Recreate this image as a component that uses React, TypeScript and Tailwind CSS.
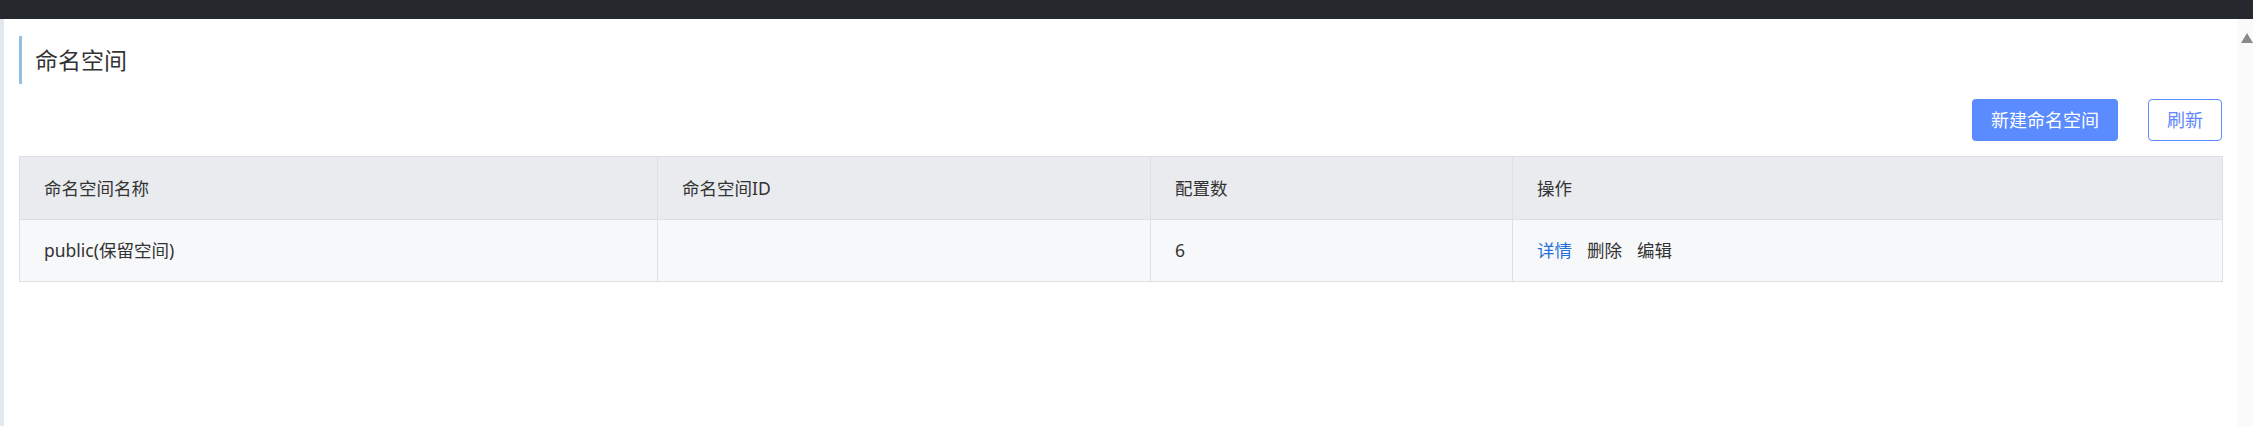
const font = { fontFamily: '"Noto Sans", "Noto Sans CJK SC", sans-serif' };

const columns = ["命名空间名称", "命名空间ID", "配置数", "操作"];

const rows = [{ name: "public(保留空间)", id: "", count: "6" }];

function Actions() {
  return (
    <div className="flex items-center gap-[15px]">
      <span className="text-[#2671d9] cursor-pointer">详情</span>
      <span className="cursor-pointer">删除</span>
      <span className="cursor-pointer">编辑</span>
    </div>
  );
}

export default function App() {
  return (
    <div className="w-[2253px] h-[426px] bg-white text-[#333] overflow-hidden flex flex-col" style={font}>
      <div className="h-[19px] bg-[#25292e] shrink-0" />
      <div className="flex flex-1">
        <div className="w-[4px] bg-[#e3e7ee]" />
        <main className="flex-1 pl-[15px] pr-[14px] pt-[17px]">
          <div className="h-[48px] border-l-[3px] border-[#94bee2] pl-[13px] flex items-center text-[23px]">
            命名空间
          </div>
          <div className="flex justify-end gap-[30px] mt-[15px] pr-px">
            <button className="h-[42px] w-[146px] rounded-[4px] bg-[#5a8bff] text-white text-[18px]">
              新建命名空间
            </button>
            <button className="h-[42px] w-[74px] rounded-[4px] border border-[#5a8bff] bg-white text-[#5f86fa] text-[18px]">
              刷新
            </button>
          </div>
          <div className="mt-[15px] grid grid-cols-[638px_493px_362px_1fr] border-t border-l border-[#dcdfe4] text-[17.5px]">
            {columns.map((c) => (
              <div key={c} className="h-[63px] bg-[#e9ebef] border-r border-b border-[#dcdfe4] pl-6 flex items-center">
                {c}
              </div>
            ))}
            {rows.map((r) => (
              <>
                <div className="h-[62px] bg-[#f7f8fa] border-r border-b border-[#dcdfe4] pl-6 flex items-center">{r.name}</div>
                <div className="h-[62px] bg-[#f7f8fa] border-r border-b border-[#dcdfe4] pl-6 flex items-center">{r.id}</div>
                <div className="h-[62px] bg-[#f7f8fa] border-r border-b border-[#dcdfe4] pl-6 flex items-center">{r.count}</div>
                <div className="h-[62px] bg-[#f7f8fa] border-r border-b border-[#dcdfe4] pl-6 flex items-center">
                  <Actions />
                </div>
              </>
            ))}
          </div>
        </main>
        <div className="w-[16px] bg-[#fafafa] relative">
          <svg className="absolute left-[4px] top-[14px]" width="12" height="10" viewBox="0 0 12 10">
            <path d="M6 0 L12 10 L0 10 Z" fill="#8a8a8a" />
          </svg>
        </div>
      </div>
    </div>
  );
}
